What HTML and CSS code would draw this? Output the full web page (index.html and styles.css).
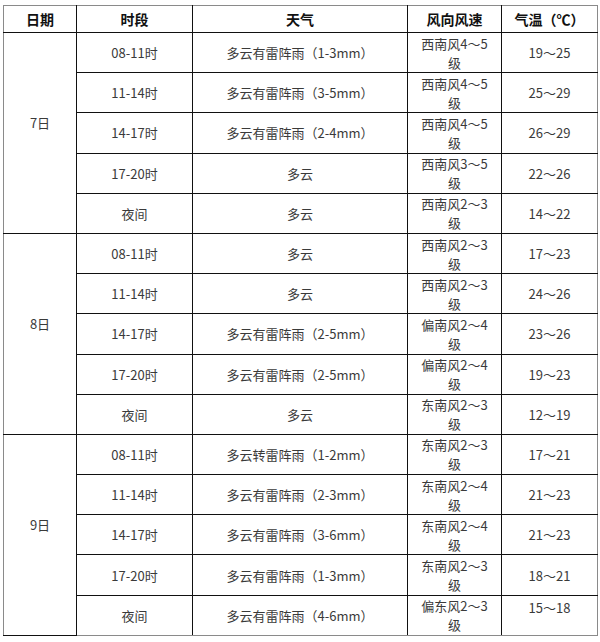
FILE: index.html
```html
<!DOCTYPE html>
<html lang="zh-CN">
<head>
<meta charset="utf-8">
<title>天气预报</title>
<link rel="stylesheet" href="styles.css">
</head>
<body>
<table class="wx">
  <colgroup>
    <col class="c-date"><col class="c-time"><col class="c-wx"><col class="c-wind"><col class="c-temp">
  </colgroup>
  <thead>
    <tr><th>日期</th><th>时段</th><th>天气</th><th>风向风速</th><th>气温（℃）</th></tr>
  </thead>
  <tbody>
    <tr><td class="date" rowspan="5">7日</td><td>08-11时</td><td>多云有雷阵雨（1-3mm）</td><td class="wind">西南风4～5级</td><td>19～25</td></tr>
    <tr><td>11-14时</td><td>多云有雷阵雨（3-5mm）</td><td class="wind">西南风4～5级</td><td>25～29</td></tr>
    <tr><td>14-17时</td><td>多云有雷阵雨（2-4mm）</td><td class="wind">西南风4～5级</td><td>26～29</td></tr>
    <tr><td>17-20时</td><td>多云</td><td class="wind">西南风3～5级</td><td>22～26</td></tr>
    <tr><td>夜间</td><td>多云</td><td class="wind">西南风2～3级</td><td>14～22</td></tr>

    <tr><td class="date" rowspan="5">8日</td><td>08-11时</td><td>多云</td><td class="wind">西南风2～3级</td><td>17～23</td></tr>
    <tr><td>11-14时</td><td>多云</td><td class="wind">西南风2～3级</td><td>24～26</td></tr>
    <tr><td>14-17时</td><td>多云有雷阵雨（2-5mm）</td><td class="wind">偏南风2～4级</td><td>23～26</td></tr>
    <tr><td>17-20时</td><td>多云有雷阵雨（2-5mm）</td><td class="wind">偏南风2～4级</td><td>19～23</td></tr>
    <tr><td>夜间</td><td>多云</td><td class="wind">东南风2～3级</td><td>12～19</td></tr>

    <tr><td class="date" rowspan="5">9日</td><td>08-11时</td><td>多云转雷阵雨（1-2mm）</td><td class="wind">东南风2～3级</td><td>17～21</td></tr>
    <tr><td>11-14时</td><td>多云有雷阵雨（2-3mm）</td><td class="wind">东南风2～4级</td><td>21～23</td></tr>
    <tr><td>14-17时</td><td>多云有雷阵雨（3-6mm）</td><td class="wind">东南风2～4级</td><td>21～23</td></tr>
    <tr><td>17-20时</td><td>多云有雷阵雨（1-3mm）</td><td class="wind">东南风2～3级</td><td>18～21</td></tr>
    <tr><td>夜间</td><td>多云有雷阵雨（4-6mm）</td><td class="wind">偏东风2～3级</td><td class="top">15～18</td></tr>
  </tbody>
</table>
</body>
</html>
```
FILE: styles.css
```css
html, body {
  margin: 0;
  padding: 0;
  background: #ffffff;
}
body {
  padding: 5px 3px 0 3px;
  font-family: "Noto Sans CJK SC", "Noto Sans", sans-serif;
}
.wx {
  border-collapse: collapse;
  table-layout: fixed;
  width: 594px;
  border: 1px solid #8a8a8a;
}
.c-date { width: 73px; }
.c-time { width: 116px; }
.c-wx { width: 215px; }
.c-wind { width: 94px; }
.c-temp { width: 96px; }
.wx th,
.wx td {
  border: 1px solid #111111;
  text-align: center;
  vertical-align: middle;
  padding: 0 4px;
}
.wx th {
  height: 26px;
  font-size: 14px;
  font-weight: bold;
  color: #111111;
  line-height: 18px;
}
.wx td {
  height: 40.2px;
  box-sizing: border-box;
  font-size: 13px;
  line-height: 19px;
  color: #3a3a3a;
}
.wx tr > :first-child { border-left-color: #8a8a8a; }
.wx tr > :last-child { border-right-color: #8a8a8a; }
.wx thead th { border-top-color: #8a8a8a; }
.wx tbody tr:last-child td { border-bottom-color: #8a8a8a; }
.wx td.date {
  border-left-color: #8a8a8a;
  border-bottom-color: #111111;
  padding-bottom: 20px;
}
.wx tbody tr:last-child td.date { border-bottom-color: #8a8a8a; }
.wx td.wind { padding: 0 10px; }
.wx td.top { vertical-align: top; padding-top: 2px; }
```
